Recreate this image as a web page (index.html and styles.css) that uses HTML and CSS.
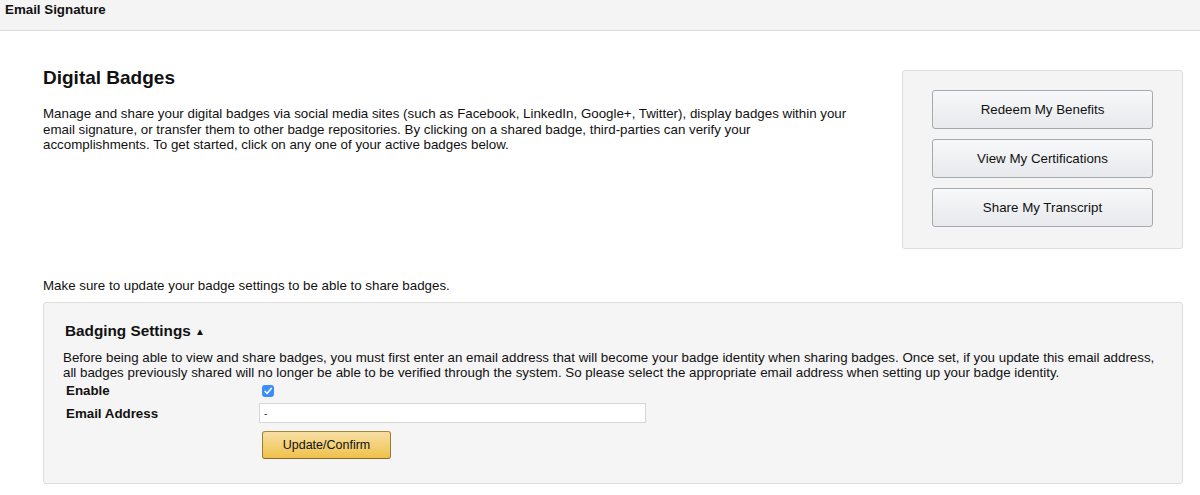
FILE: index.html
```html
<!DOCTYPE html>
<html lang="en">
<head>
<meta charset="utf-8">
<title>Email Signature</title>
<link rel="stylesheet" href="styles.css">
</head>
<body>
<header class="topbar">Email Signature</header>
<main class="page">
  <section class="intro">
    <div class="intro-text">
      <h1 class="title">Digital Badges</h1>
      <p class="lead">Manage and share your digital badges via social media sites (such as Facebook, LinkedIn, Google+, Twitter), display badges within your email signature, or transfer them to other badge repositories. By clicking on a shared badge, third-parties can verify your accomplishments. To get started, click on any one of your active badges below.</p>
    </div>
    <aside class="actions">
      <button class="btn" type="button">Redeem My Benefits</button>
      <button class="btn" type="button">View My Certifications</button>
      <button class="btn" type="button">Share My Transcript</button>
    </aside>
  </section>
  <p class="note">Make sure to update your badge settings to be able to share badges.</p>
  <section class="settings">
    <h2 class="settings-title">Badging Settings <span class="caret">&#9650;</span></h2>
    <p class="settings-text">Before being able to view and share badges, you must first enter an email address that will become your badge identity when sharing badges. Once set, if you update this email address, all badges previously shared will no longer be able to be verified through the system. So please select the appropriate email address when setting up your badge identity.</p>
    <div class="form">
      <label class="label" for="enable">Enable</label>
      <div class="field"><span class="check" id="enable"><svg viewBox="0 0 12 12" width="12" height="12"><path d="M3 6.3 L5.1 8.4 L9.2 3.4" fill="none" stroke="#fff" stroke-width="1.5" stroke-linecap="round" stroke-linejoin="round"/></svg></span></div>
      <label class="label" for="email">Email Address</label>
      <div class="field"><input class="input" id="email" type="text" value="-"></div>
      <div></div>
      <div class="field"><button class="btn-primary" type="button">Update/Confirm</button></div>
    </div>
  </section>
</main>
</body>
</html>
```

FILE: styles.css
```css
html, body {
  margin: 0;
  padding: 0;
  background: #ffffff;
  font-family: "Liberation Sans", Arial, sans-serif;
  color: #111111;
  font-size: 13.33px;
}

.topbar {
  height: 31px;
  box-sizing: border-box;
  padding: 2px 5px 0;
  font-size: 13.33px;
  font-weight: bold;
  line-height: 16px;
  background: #f4f4f4;
  border-bottom: 1px solid #dddddd;
}

.page {
  padding: 39px 17px 20px 43px;
}

.intro {
  display: flex;
  justify-content: space-between;
  align-items: flex-start;
}

.intro-text {
  width: 808px;
}

.title {
  margin: 0;
  font-size: 19px;
  line-height: 16px;
  font-weight: bold;
}

.lead {
  margin: 20px 0 0;
  line-height: 15.5px;
}

.actions {
  width: 281px;
  box-sizing: border-box;
  height: 179px;
  padding: 19px 29px 0;
  background: #f4f4f4;
  border: 1px solid #dddddd;
  border-radius: 3px;
  display: flex;
  flex-direction: column;
  gap: 10px;
}

.btn {
  height: 39px;
  width: 221px;
  border: 1px solid #a6a9ae;
  border-radius: 3px;
  background: linear-gradient(#f7f8fa, #e7e9ec);
  font-family: "Liberation Sans", Arial, sans-serif;
  font-size: 13.33px;
  color: #111111;
  padding: 0;
}

.note {
  margin: 29px 0 0;
  line-height: 16px;
}

.settings {
  margin-top: 8px;
  height: 182px;
  box-sizing: border-box;
  padding: 19px 19px 0;
  background: #f5f5f5;
  border: 1px solid #dddddd;
  border-radius: 3px;
}

.settings-title {
  margin: 0 0 0 2px;
  font-size: 15.3px;
  line-height: 18px;
  font-weight: bold;
}

.caret {
  font-size: 10px;
  vertical-align: 1px;
}

.settings-text {
  margin: 9px 0 0;
  line-height: 15px;
}

.form {
  display: grid;
  grid-template-columns: 196px 1fr;
  row-gap: 3px;
  align-items: center;
  margin-top: 1px;
}

.label {
  padding-left: 3px;
  font-weight: bold;
  line-height: 19px;
}

.field {
  display: flex;
  align-items: center;
  min-height: 19px;
}

.check {
  display: inline-flex;
  align-items: center;
  justify-content: center;
  width: 12px;
  height: 12px;
  margin-left: 3px;
  border-radius: 3px;
  background: #3a8ef6;
}

.input {
  width: 387px;
  height: 20px;
  box-sizing: border-box;
  border: 1px solid #d6d6d6;
  background: #ffffff;
  padding: 0 4px;
  font-family: "Liberation Sans", Arial, sans-serif;
  font-size: 10px;
  color: #333333;
}

.btn-primary {
  margin-left: 3px;
  margin-top: 5px;
  width: 129px;
  height: 28px;
  border: 1px solid #a88734;
  border-color: #a88734 #9c7e31 #846a29;
  border-radius: 3px;
  background: linear-gradient(#f7dfa5, #f0c14b);
  font-family: "Liberation Sans", Arial, sans-serif;
  font-size: 12.5px;
  color: #111111;
  padding: 0;
}
```
